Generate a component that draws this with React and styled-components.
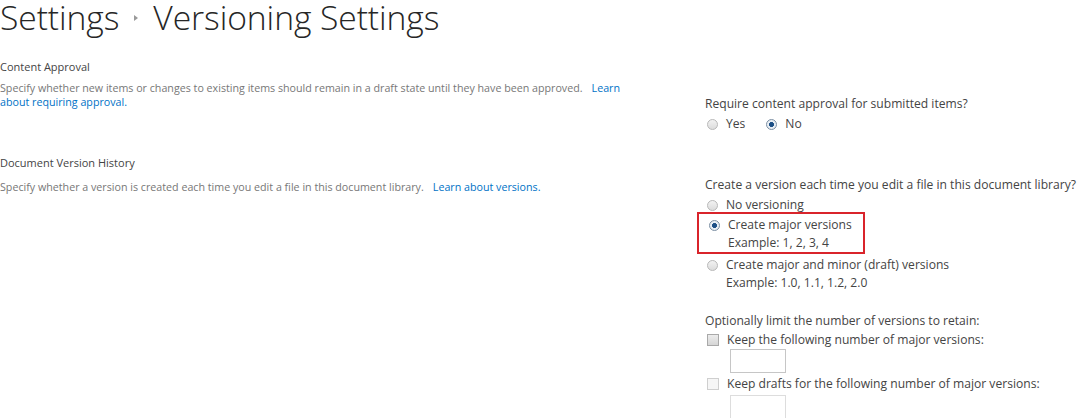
import React from "react";
import styled, { createGlobalStyle } from "styled-components";

const Global = createGlobalStyle`
  html, body {
    margin: 0;
    padding: 0;
    background: #ffffff;
  }
  body {
    font-family: "Open Sans", "Noto Sans", "Liberation Sans", sans-serif;
    color: #444444;
    overflow: hidden;
  }
`;

const Page = styled.div`
  width: 1079px;
  height: 418px;
  overflow: hidden;
`;

const Title = styled.h1`
  margin: 0;
  height: 50px;
  display: flex;
  align-items: flex-start;
  gap: 15px;
  font-weight: 300;
  font-size: 33.7px;
  line-height: 34px;
  color: #262626;
  letter-spacing: -0.1px;
  white-space: nowrap;
`;

const Crumb = styled.span`
  display: inline-block;
`;

const CrumbArrow = styled.span`
  display: inline-block;
  width: 0;
  height: 0;
  margin-top: 15px;
  border-top: 3px solid transparent;
  border-bottom: 3px solid transparent;
  border-left: 4px solid #9a9a9a;
`;

const Section = styled.section`
  display: grid;
  grid-template-columns: 705px 1fr;
`;

const Describe = styled.div`
  padding-top: ${(p) => p.$top}px;
`;

const Heading = styled.h3`
  margin: 0;
  font-size: 11px;
  font-weight: 400;
  line-height: 14px;
  color: #444444;
`;

const Description = styled.p`
  margin: ${(p) => p.$gap}px 0 0;
  width: 632px;
  font-size: 10.7px;
  line-height: 14px;
  color: #777777;
`;

const Link = styled.a`
  color: #0072c6;
  text-decoration: none;
  margin-left: 9px;
`;

const Controls = styled.div`
  padding-top: ${(p) => p.$top}px;
  font-size: 12.1px;
  line-height: 18px;
  color: #444444;
`;

const Question = styled.div`
  white-space: nowrap;
  margin-top: ${(p) => p.$gap || 0}px;
`;

const InlineChoices = styled.div`
  display: flex;
  gap: 19px;
  margin-top: 2px;
`;

const Choice = styled.label`
  display: flex;
  align-items: flex-start;
  gap: 8px;
  padding-left: 2px;
  margin-top: ${(p) => p.$gap ?? 2}px;
`;

const RadioDot = styled.span`
  flex: none;
  width: 9px;
  height: 9px;
  margin-top: 4px;
  border-radius: 50%;
  border: 1px solid ${(p) => (p.$on ? "#7c8fa3" : "#b8b8b8")};
  background: ${(p) =>
    p.$on
      ? "radial-gradient(circle, #1c4f86 0 2.2px, #e8eef4 2.8px)"
      : "linear-gradient(#f2f2f2, #dcdcdc)"};
`;

const ChoiceText = styled.span`
  display: flex;
  flex-direction: column;
`;

const Highlight = styled.div`
  margin: -2px 0 0 -8px;
  width: 156px;
  padding: 2px 0 0 8px;
  border: 2px solid #d9242b;
  box-sizing: content-box;
`;

const Check = styled.span`
  flex: none;
  width: 10px;
  height: 10px;
  margin-top: 3px;
  border: 1px solid ${(p) => (p.$dim ? "#cfcfcf" : "#a9a9a9")};
  background: ${(p) => (p.$dim ? "#f6f6f6" : "linear-gradient(#ececec, #d6d6d6)")};
`;

const NumberBox = styled.div`
  margin: ${(p) => p.$gap}px 0 0 25px;
  width: 54px;
  height: 22px;
  border: 1px solid ${(p) => (p.$dim ? "#dddddd" : "#c6c6c6")};
  background: #ffffff;
`;

export default function App() {
  return (
    <Page>
      <Global />
      <Title>
        <Crumb>Settings</Crumb>
        <CrumbArrow />
        <Crumb>Versioning Settings</Crumb>
      </Title>

      <Section>
        <Describe $top={10}>
          <Heading>Content Approval</Heading>
          <Description $gap={7}>
            Specify whether new items or changes to existing items should remain in a draft
            state until they have been approved.
            <Link href="#">Learn about requiring approval.</Link>
          </Description>
        </Describe>
        <Controls $top={45}>
          <Question>Require content approval for submitted items?</Question>
          <InlineChoices>
            <Choice $gap={0}>
              <RadioDot />
              <span>Yes</span>
            </Choice>
            <Choice $gap={0}>
              <RadioDot $on />
              <span>No</span>
            </Choice>
          </InlineChoices>
        </Controls>
      </Section>

      <Section>
        <Describe $top={23}>
          <Heading>Document Version History</Heading>
          <Description $gap={10}>
            Specify whether a version is created each time you edit a file in this document
            library.
            <Link href="#">Learn about versions.</Link>
          </Description>
        </Describe>
        <Controls $top={43}>
          <Question>Create a version each time you edit a file in this document library?</Question>
          <Choice>
            <RadioDot />
            <span>No versioning</span>
          </Choice>
          <Highlight>
            <Choice $gap={0}>
              <RadioDot $on />
              <ChoiceText>
                <span>Create major versions</span>
                <span>Example: 1, 2, 3, 4</span>
              </ChoiceText>
            </Choice>
          </Highlight>
          <Choice>
            <RadioDot />
            <ChoiceText>
              <span>Create major and minor (draft) versions</span>
              <span>Example: 1.0, 1.1, 1.2, 2.0</span>
            </ChoiceText>
          </Choice>

          <Question $gap={20}>Optionally limit the number of versions to retain:</Question>
          <Choice $gap={1}>
            <Check />
            <span>Keep the following number of major versions:</span>
          </Choice>
          <NumberBox $gap={0} />
          <Choice>
            <Check $dim />
            <span>Keep drafts for the following number of major versions:</span>
          </Choice>
          <NumberBox $gap={2} $dim />
        </Controls>
      </Section>
    </Page>
  );
}
